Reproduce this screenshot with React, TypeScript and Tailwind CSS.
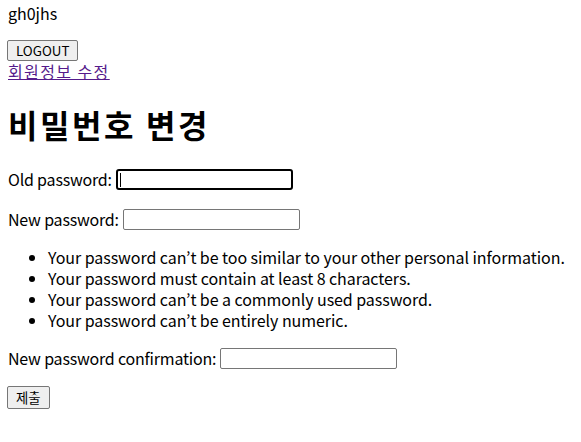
import React from 'react';

const inputBox = 'block h-[21px] w-[177px] border border-[#767676] rounded-[2px] bg-white';

const rules = [
  "Your password can’t be too similar to your other personal information.",
  'Your password must contain at least 8 characters.',
  'Your password can’t be a commonly used password.',
  'Your password can’t be entirely numeric.',
];

export default function App() {
  return (
    <div
      className="min-h-screen bg-white px-2 text-[16px] leading-[21px] text-black"
      style={{ fontFamily: '"Noto Sans CJK KR", "Noto Sans", sans-serif' }}
    >
      <div className="pt-[3px]">gh0jhs</div>

      <button className="ml-[-1px] mt-[16px] block h-[21px] rounded-[2px] border border-[#767676] bg-[#efefef] px-[8px] text-[13.33px] leading-[17px]">
        LOGOUT
      </button>
      <a href="#" className="block w-fit tracking-[1.4px] text-[#551a8b] underline">
        회원정보 수정
      </a>

      <h1 className="mt-[21px] text-[32px] font-bold leading-[43px] tracking-[2.6px]">비밀번호 변경</h1>

      {/* form */}
      <div className="mt-[23px] flex items-center gap-[4px]">
        <span className="tracking-[-0.2px]">Old password:</span>
        <span className="relative block h-[21px] w-[177px] rounded-[3px] border-2 border-black bg-white">
          <span className="absolute left-[2px] top-[2px] h-[14px] w-px bg-black" />
        </span>
      </div>

      <div className="mt-[19px] flex items-center gap-[4px]">
        <span className="tracking-[-0.2px]">New password:</span>
        <span className={inputBox} />
      </div>

      <ul className="mt-[17px] list-disc pl-[40px] tracking-[-0.06px]">
        {rules.map((r) => (
          <li key={r}>{r}</li>
        ))}
      </ul>

      <div className="mt-[17px] flex items-center gap-[4px]">
        <span className="tracking-[-0.2px]">New password confirmation:</span>
        <span className={inputBox} />
      </div>

      <button className="ml-[-1px] mt-[17px] block h-[23px] rounded-[2px] border border-[#767676] bg-[#efefef] px-[8px] text-[13.33px] leading-[19px]">
        제출
      </button>
    </div>
  );
}
